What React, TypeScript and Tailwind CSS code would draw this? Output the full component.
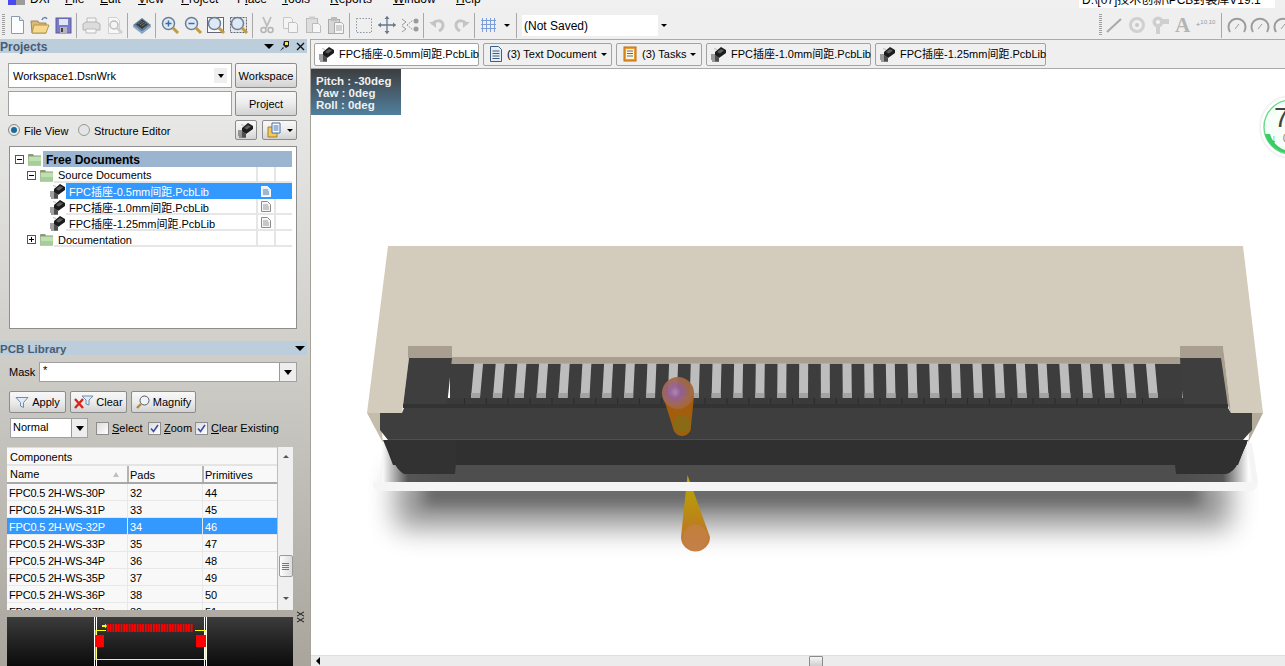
import React from "react";

const F = '"Liberation Sans","Noto Sans CJK SC",sans-serif';

function Chip({ className = "" }: { className?: string }) {
  return (
    <svg viewBox="0 0 16 16" className={`w-4 h-4 shrink-0 ${className}`}>
      <path d="M0 9h7M0 11h7M0 13h7M1 15h7" stroke="#444" strokeWidth="1" />
      <path d="M4 6l6-5 5 3v3l-7 5-4-3z" fill="#1c1c1c" />
      <path d="M6 6l4-3 3 1.500-4 3z" fill="#5e5e5e" />
      <path d="M4 9l4 3v3.500H4z" fill="#4e4e4e" />
      <path d="M3 2.500l3 1" stroke="#bbb" />
    </svg>
  );
}

function Folder() {
  return (
    <svg viewBox="0 0 15 13" className="w-[15px] h-[13px] shrink-0">
      <path d="M1 3V1.500L2 1h4l1 1.500h7v10H1z" fill="#8a9a78" />
      <rect x="1.500" y="3.500" width="12.500" height="9" fill="#bfe0b0" />
      <rect x="1.500" y="8" width="12.500" height="4.500" fill="#a4d098" />
    </svg>
  );
}

function Exp({ open }: { open: boolean }) {
  return (
    <span className="w-[9px] h-[9px] border border-[#555] bg-white relative shrink-0 block">
      <span className="absolute left-[1px] top-[3px] w-[5px] h-[1px] bg-black" />
      {!open && <span className="absolute left-[3px] top-[1px] w-[1px] h-[5px] bg-black" />}
    </span>
  );
}

function DocGlyph({ on }: { on?: boolean }) {
  const c = on ? "#ffffff" : "#8c8c8c";
  return (
    <svg viewBox="0 0 10 11" className="w-[10px] h-[11px]">
      <path d="M.5.500h6l3 3v7H.5z" fill={on ? "#e8f0ff" : "#f6f6f6"} stroke={c} />
      <path d="M2 4h5M2 6h6M2 8h6" stroke={on ? "#5a7a9a" : "#999"} />
    </svg>
  );
}

function TreeCols({ selected, doc }: { selected?: boolean; doc?: boolean }) {
  return (
    <>
      <span className="w-[18px] h-full border-l-2 border-[#e6e6e6] flex items-center justify-center shrink-0" style={selected ? { borderColor: "#3399ff" } : undefined}>
        {doc && <DocGlyph on={selected} />}
      </span>
      <span className="w-[18px] h-full border-l-2 border-[#e6e6e6] shrink-0" style={selected ? { borderColor: "#3399ff" } : undefined} />
    </>
  );
}

function TreeFile({ name, selected }: { name: string; selected?: boolean }) {
  return (
    <div className="flex h-[16px] items-center pl-[35px]">
      <Chip />
      <div className={`flex items-center h-full flex-1 ${selected ? "bg-[#3399ff] text-white" : "border-b-2 border-[#e6e6e6] text-black"}`}>
        <span className="flex-1 pl-[3px] whitespace-nowrap h-full leading-[18px]">{name}</span>
        <TreeCols selected={selected} doc />
      </div>
    </div>
  );
}

function Sep({ w = "w-[5px]" }: { w?: string }) {
  return (
    <span className={`${w} h-[25px] flex justify-center shrink-0`}>
      <span className="w-[1px] h-full bg-[#a8a8a8]" />
    </span>
  );
}

function Grip() {
  return <span className="w-[3px] h-[22px] border-y-0 shrink-0 bg-[repeating-linear-gradient(to_bottom,#a0a0a0_0,#a0a0a0_1px,#efefef_1px,#efefef_2px)]" />;
}

function TB({ children, w = "w-[23px]" }: { children: React.ReactNode; w?: string }) {
  return <span className={`${w} h-[25px] flex items-center justify-center shrink-0`}>{children}</span>;
}

const S = ({ children }: { children: React.ReactNode }) => (
  <svg viewBox="0 0 20 20" className="w-5 h-5">
    {children}
  </svg>
);

const Lens = ({ plus, minus, box, dash }: { plus?: boolean; minus?: boolean; box?: boolean; dash?: boolean }) => (
  <S>
    {(box || dash) && <rect x="1.500" y="2.500" width="16" height="15" fill={dash ? "#e8e8e8" : "#f8f8f8"} stroke="#667" strokeDasharray={dash ? "2 1" : undefined} />}
    <circle cx="8.500" cy="8.500" r="6" fill="#dfe9f5" stroke="#6a7f96" strokeWidth="1.500" />
    <path d="M13 13l5 5" stroke="#c49a3c" strokeWidth="3" />
    {(plus || minus) && <path d="M5.500 8.500h6" stroke="#3d6d9d" strokeWidth="1.500" />}
    {plus && <path d="M8.500 5.500v6" stroke="#3d6d9d" strokeWidth="1.500" />}
  </S>
);

function Toolbar() {
  return (
    <div className="h-[31px] bg-[#efefef] flex items-center pl-[2px] overflow-hidden shrink-0 pt-[3px] w-[1285px]">
      <Grip />
      <TB>
        <S>
          <path d="M4.500 1.500h8l4 4v13h-12z" fill="#fbfdff" stroke="#8a9ab0" />
          <path d="M12.500 1.500v4h4" fill="#dde6f2" stroke="#8a9ab0" />
        </S>
      </TB>
      <TB>
        <S>
          <path d="M1 6h7l1 2h7v10H2z" fill="#d9b878" stroke="#a08850" />
          <path d="M4 10h15l-3 8H2z" fill="#f8d98a" stroke="#b09858" />
          <path d="M12 5c1-3 4-3 5-1" fill="none" stroke="#5f86b8" strokeWidth="1.500" />
        </S>
      </TB>
      <TB>
        <S>
          <rect x="3" y="3" width="15" height="15" fill="#7b7bc8" stroke="#5a5aa0" />
          <rect x="6" y="4" width="9" height="6" fill="#dfe6f6" />
          <rect x="7" y="12" width="7" height="6" fill="#b4b4c4" />
          <rect x="8" y="13" width="2" height="4" fill="#444" />
        </S>
      </TB>
      <Sep />
      <TB>
        <S>
          <path d="M6 3h9v5H6z" fill="#f4f4f4" stroke="#bbb" />
          <path d="M2 9l3-2h11l3 2v6H2z" fill="#dcdcdc" stroke="#b4b4b4" />
          <path d="M5 14h10v4H5z" fill="#f8f8f8" stroke="#bbb" />
        </S>
      </TB>
      <TB>
        <S>
          <path d="M4.500 2.500h8l3 3v13h-11z" fill="#f7f7f7" stroke="#d0d0d0" />
          <circle cx="10" cy="10" r="4" fill="#f4f4f4" stroke="#bdbdbd" strokeWidth="1.500" />
          <path d="M13 13l5 5" stroke="#cfcfcf" strokeWidth="2.500" />
        </S>
      </TB>
      <Sep />
      <TB>
        <S>
          <path d="M1 10l9-7 9 7-9 7z" fill="#5d7f9f" />
          <path d="M4 9.500l6-5 6 5-6 4.500z" fill="#3a3a3a" />
          <path d="M1 10v2l9 7 9-7v-2l-9 7z" fill="#8aa6c0" />
          <path d="M6 9l4-3M8 10l4-3M10 11l4-3" stroke="#888" strokeWidth=".7" />
        </S>
      </TB>
      <Sep />
      <TB><Lens plus /></TB>
      <TB><Lens minus /></TB>
      <TB><Lens box /></TB>
      <TB><Lens dash /></TB>
      <Sep />
      <TB>
        <S>
          <path d="M6 2l4 9 4-9M14 2l-5 11" fill="none" stroke="#bdbdbd" strokeWidth="1.800" />
          <circle cx="6.500" cy="15" r="2.500" fill="none" stroke="#b4b4b4" strokeWidth="1.500" />
          <circle cx="13.500" cy="15" r="2.500" fill="none" stroke="#b4b4b4" strokeWidth="1.500" />
        </S>
      </TB>
      <TB>
        <S>
          <path d="M3.500 2.500h7l2 2v9h-9z" fill="#f4f4f4" stroke="#c6c6c6" />
          <path d="M8.500 7.500h7l2 2v8h-9z" fill="#f4f4f4" stroke="#c0c0c0" />
        </S>
      </TB>
      <TB>
        <S>
          <rect x="3.500" y="3.500" width="11" height="14" fill="#dedede" stroke="#bbb" />
          <rect x="6" y="1.500" width="6" height="3" fill="#ccc" />
          <path d="M9.500 8.500h6l2 2v7h-8z" fill="#f6f6f6" stroke="#bcbcbc" />
        </S>
      </TB>
      <TB>
        <S>
          <rect x="2.500" y="4.500" width="11" height="14" fill="#d6d6d6" stroke="#aaa" />
          <rect x="5" y="2" width="6" height="4" fill="#bbb" />
          <path d="M8.500 7.500h7l2 2v9h-9z" fill="#f6f6f6" stroke="#aaa" />
          <path d="M10 11h6M10 13h6M10 15h6" stroke="#aaa" />
        </S>
      </TB>
      <Sep />
      <TB>
        <S>
          <rect x="2.500" y="3.500" width="15" height="14" fill="none" stroke="#8a96a4" strokeDasharray="1.500 1.500" />
        </S>
      </TB>
      <TB>
        <S>
          <path d="M10 1.500v17M1.500 10h17" stroke="#64788e" strokeWidth="1.300" />
          <path d="M10 1l-2.500 3h5zM10 19l-2.500-3h5zM1 10l3-2.500v5zM19 10l-3-2.500v5z" fill="#64788e" />
        </S>
      </TB>
      <TB>
        <S>
          <path d="M2 4l4 3-4 3M2 11l4 3-4 3" fill="none" stroke="#9a9a9a" />
          <path d="M7 10l6-5M7 10l6 5" stroke="#999" strokeDasharray="1.500 1" />
          <circle cx="16" cy="6" r="2.500" fill="#9b9b9b" />
          <circle cx="16" cy="14" r="2.500" fill="#9b9b9b" />
        </S>
      </TB>
      <Sep />
      <TB>
        <S>
          <path d="M5 10c0-5 10-6 10 0 0 3-2 5-4 6" fill="none" stroke="#c4c4c4" strokeWidth="3" />
          <path d="M1 7h7v6z" fill="#c4c4c4" />
        </S>
      </TB>
      <TB>
        <S>
          <path d="M15 10c0-5-10-6-10 0 0 3 2 5 4 6" fill="none" stroke="#c4c4c4" strokeWidth="3" />
          <path d="M19 7h-7v6z" fill="#c4c4c4" />
        </S>
      </TB>
      <Sep />
      <TB>
        <S>
          <path d="M3.500 3v14M7.500 3v14M11.500 3v14M15.500 3v14M2 5.500h15M2 9.500h15M2 13.500h15" stroke="#7c9fdc" />
        </S>
      </TB>
      <span className="w-[14px] flex justify-center shrink-0">
        <span className="border-x-[3px] border-t-[3px] border-x-transparent border-t-black" />
      </span>
      <Sep />
      <div className="ml-[3px] w-[147px] h-[21px] bg-white flex items-center shrink-0 pl-[2px] text-[12px] mt-[1px]">
        <span className="flex-1">(Not Saved)</span>
        <span className="w-[11px] h-full bg-[#efefef] flex items-center justify-center">
          <span className="border-x-[3px] border-t-[3px] border-x-transparent border-t-black" />
        </span>
      </div>
      <span className="ml-[430px] shrink-0 flex items-center"><Grip /></span>
      <TB>
        <S><path d="M3 17L17 4" stroke="#a8a8a8" strokeWidth="2" /></S>
      </TB>
      <TB>
        <S>
          <circle cx="10" cy="10" r="6.500" fill="none" stroke="#d0d0d0" strokeWidth="3" />
          <circle cx="10" cy="10" r="2" fill="#c8c8c8" />
        </S>
      </TB>
      <TB>
        <S>
          <circle cx="8" cy="7" r="5.500" fill="#cfcfcf" />
          <circle cx="8" cy="7" r="2" fill="#f4f4f4" />
          <path d="M12 4h7v5h-6zM6 12h4v7H6z" fill="#cfcfcf" />
        </S>
      </TB>
      <TB>
        <span className="text-[#b4b4b4] font-bold text-[21px] leading-none" style={{ fontFamily: '"Liberation Serif",serif' }}>A</span>
      </TB>
      <TB>
        <span className="text-[#999] text-[8px] leading-none whitespace-nowrap">+<sup>10,10</sup></span>
      </TB>
      <Sep w="w-[8px]" />
      {[0, 1, 2].map((i) => (
        <TB key={i}>
          <S>
            <path d="M3 17a8.500 8.500 0 1 1 14 0" fill="none" stroke="#9c9c9c" strokeWidth="2" />
            <path d="M8 14l4-5" stroke="#9c9c9c" />
          </S>
        </TB>
      ))}
    </div>
  );
}

function PBtn({ children, className = "" }: { children: React.ReactNode; className?: string }) {
  return (
    <button className={`rounded-[2px] border border-[#8c8c8c] bg-gradient-to-b from-[#f8f8f8] via-[#ececec] to-[#d2d2d2] flex items-center justify-center shrink-0 ${className}`}>
      {children}
    </button>
  );
}

const Funnel = () => (
  <svg viewBox="0 0 14 13" className="w-[14px] h-[13px] shrink-0">
    <path d="M1 1.500h12L8.500 6.500v5l-3-1.500V6.500z" fill="#e0ecf8" stroke="#6f8eb0" />
  </svg>
);

function Check({ on }: { on?: boolean }) {
  return (
    <span className="w-[13px] h-[13px] border border-[#8d8d8d] bg-gradient-to-br from-[#dcdcdc] to-white flex items-center justify-center shrink-0">
      {on && (
        <svg viewBox="0 0 11 11" className="w-[11px] h-[11px]">
          <path d="M2 5.500l2.500 3L9 2" fill="none" stroke="#3a4fa0" strokeWidth="1.600" />
        </svg>
      )}
    </span>
  );
}

const Caret = () => <span className="border-x-[4px] border-t-[5px] border-x-transparent border-t-black" />;

function ProjectsPanel() {
  return (
    <div className="h-[302px] shrink-0 flex flex-col text-[11px]">
      <div className="h-[14px] bg-[#bccddc] mr-[3px] flex items-center shrink-0 relative">
        <span className="font-bold text-[#4a5c72] h-full leading-[16px] text-[12px]">Projects</span>
        <span className="ml-auto flex items-center gap-[6px] pr-[2px]">
          <span className="border-x-[5px] border-t-[5px] border-x-transparent border-t-black" />
          <svg viewBox="0 0 10 10" className="w-[10px] h-[10px]">
            <path d="M4 0h5v5L6 7 3 4zM3 6L0 10l4-3z" fill="#222" />
            <path d="M5 1h3v3H5z" fill="#ffe24a" />
          </svg>
          <svg viewBox="0 0 9 9" className="w-[9px] h-[9px]">
            <path d="M1 1l7 7M8 1L1 8" stroke="#111" strokeWidth="1.400" />
          </svg>
        </span>
      </div>
      <div className="pl-[8px] pr-[13px] pt-[10px] flex flex-col">
        <div className="flex gap-[3px] h-[25px]">
          <div className="w-[224px] bg-white border border-[#a0a0a0] flex items-center pl-[4px]">
            <span className="flex-1 pt-[1px]">Workspace1.DsnWrk</span>
            <span className="w-[13px] h-[15px] mr-[4px] bg-[#efefef] flex items-center justify-center">
              <span className="border-x-[3px] border-t-[4px] border-x-transparent border-t-black" />
            </span>
          </div>
          <PBtn className="w-[62px] pt-[1px]">Workspace</PBtn>
        </div>
        <div className="flex gap-[3px] h-[25px] mt-[3px]">
          <div className="w-[224px] bg-white border border-[#a0a0a0]" />
          <PBtn className="w-[62px] pt-[1px]">Project</PBtn>
        </div>
        <div className="flex items-center h-[20px] mt-[4px]">
          <span className="w-[12px] h-[12px] rounded-full border border-[#888] bg-[#e8e8e8] flex items-center justify-center ml-[0px]">
            <span className="w-[6px] h-[6px] rounded-full bg-[#1b6a9a]" />
          </span>
          <span className="ml-[4px] w-[54px] pt-[2px]">File View</span>
          <span className="w-[12px] h-[12px] rounded-full border border-[#999] bg-[#e4e4e4]" />
          <span className="ml-[4px] pt-[2px]">Structure Editor</span>
          <PBtn className="w-[22px] h-[20px] ml-auto mr-[5px]"><Chip /></PBtn>
          <PBtn className="w-[35px] h-[20px]">
            <svg viewBox="0 0 16 16" className="w-4 h-4">
              <path d="M1 5h9v10H1z" fill="#f4c95a" stroke="#a08030" />
              <path d="M5 1h8v10H5z" fill="#fff" stroke="#3d6da8" />
              <path d="M6.500 4h5M6.500 6h5M6.500 8h5" stroke="#3d6da8" />
            </svg>
            <span className="ml-[4px] border-x-[3px] border-t-[3px] border-x-transparent border-t-black" />
          </PBtn>
        </div>
        <div className="ml-[1px] mt-[6px] h-[183px] w-[288px] bg-white border border-[#8e8e8e] pt-[4px] pl-[5px] pr-[4px]">
          <div className="flex items-center h-[16px]">
            <Exp open />
            <span className="ml-[3px]"><Folder /></span>
            <span className="flex-1 h-full bg-[#9bb4d0] pl-[3px] font-bold leading-[18px] ml-[1px] text-[12px]">Free Documents</span>
          </div>
          <div className="flex items-center h-[16px] pl-[12px]">
            <Exp open />
            <span className="ml-[3px]"><Folder /></span>
            <div className="flex flex-1 h-full border-b-2 border-[#e6e6e6]">
              <span className="flex-1 pl-[4px] leading-[17px]">Source Documents</span>
              <TreeCols />
            </div>
          </div>
          <TreeFile name="FPC插座-0.5mm间距.PcbLib" selected />
          <TreeFile name="FPC插座-1.0mm间距.PcbLib" />
          <TreeFile name="FPC插座-1.25mm间距.PcbLib" />
          <div className="flex items-center h-[16px] pl-[12px]">
            <Exp open={false} />
            <span className="ml-[3px]"><Folder /></span>
            <div className="flex flex-1 h-full border-b-2 border-[#e6e6e6]">
              <span className="flex-1 pl-[4px] leading-[18px]">Documentation</span>
              <TreeCols />
            </div>
          </div>
        </div>
      </div>
    </div>
  );
}

const rows = [
  ["FPC0.5 2H-WS-30P", "32", "44"],
  ["FPC0.5 2H-WS-31P", "33", "45"],
  ["FPC0.5 2H-WS-32P", "34", "46"],
  ["FPC0.5 2H-WS-33P", "35", "47"],
  ["FPC0.5 2H-WS-34P", "36", "48"],
  ["FPC0.5 2H-WS-35P", "37", "49"],
  ["FPC0.5 2H-WS-36P", "38", "50"],
  ["FPC0.5 2H-WS-37P", "39", "51"],
];

function LibraryPanel() {
  return (
    <div className="flex-1 flex flex-col text-[11px] min-h-0">
      <div className="h-[14px] bg-[#bccddc] mr-[3px] flex items-center shrink-0">
        <span className="font-bold text-[#4a5c72] h-full leading-[16px] text-[11.5px]">PCB Library</span>
        <span className="ml-auto mr-[2px] border-x-[5px] border-t-[5px] border-x-transparent border-t-black" />
      </div>
      <div className="flex items-center mt-[7px] pl-[9px] h-[20px] shrink-0">
        <span className="w-[30px]">Mask</span>
        <div className="w-[258px] h-[20px] bg-white border border-[#a0a0a0] flex">
          <span className="flex-1 pl-[3px] leading-[14px]">*</span>
          <span className="w-[17px] bg-[#eeeeee] border-l border-[#999] flex items-center justify-center"><Caret /></span>
        </div>
      </div>
      <div className="flex pl-[9px] gap-[4px] mt-[9px] h-[22px] shrink-0">
        <PBtn className="w-[57px] gap-[3px]"><Funnel />Apply</PBtn>
        <PBtn className="w-[57px] gap-[2px]">
          <svg viewBox="0 0 20 14" className="w-[20px] h-[14px]">
            <path d="M1 4l8 9M9 4l-8 9" stroke="#d8261c" strokeWidth="2.400" />
            <path d="M8 1h11l-4 4v5l-3-1V5z" fill="#e0ecf8" stroke="#6f8eb0" />
          </svg>
          Clear
        </PBtn>
        <PBtn className="w-[65px] gap-[3px]">
          <svg viewBox="0 0 14 14" className="w-[14px] h-[14px]">
            <circle cx="8.500" cy="5.500" r="4.500" fill="#eef4fb" stroke="#5a5a5a" />
            <path d="M5 9l-4 4" stroke="#b88a2c" strokeWidth="2.400" />
          </svg>
          Magnify
        </PBtn>
      </div>
      <div className="flex items-center pl-[10px] mt-[5px] h-[20px] shrink-0">
        <div className="w-[78px] h-[20px] bg-white border border-[#a0a0a0] flex">
          <span className="flex-1 pl-[2px] leading-[16px]">Normal</span>
          <span className="w-[16px] bg-[#eeeeee] border-l border-[#999] flex items-center justify-center"><Caret /></span>
        </div>
        <span className="ml-[8px]"><Check /></span>
        <span className="ml-[3px] w-[36px] whitespace-nowrap pt-[1px]"><u>S</u>elect</span>
        <Check on />
        <span className="ml-[3px] w-[31px] whitespace-nowrap pt-[1px]"><u>Z</u>oom</span>
        <Check on />
        <span className="ml-[3px] whitespace-nowrap pt-[1px]"><u>C</u>lear Existing</span>
      </div>
      <div className="ml-[7px] mt-[9px] w-[286px] h-[163px] flex overflow-hidden shrink-0 bg-[#f8f8f8]">
        <div className="w-[270px] flex flex-col overflow-hidden">
          <div className="h-[19px] border-b-2 border-[#e4e4e4] border-t border-t-[#dcdcdc] pl-[3px] leading-[19px] shrink-0">Components</div>
          <div className="h-[18px] flex border-b-2 border-[#a8a8a8] leading-[19px] shrink-0">
            <span className="w-[120px] pl-[3px] flex justify-between pr-[8px] items-center">
              Name
              <span className="border-x-[3px] border-b-[5px] border-x-transparent border-b-[#c0c0c0]" />
            </span>
            <span className="w-[75px] pl-[1px] border-l-2 border-[#b4b4b4]">Pads</span>
            <span className="flex-1 pl-[1px] border-l-2 border-[#b4b4b4]">Primitives</span>
          </div>
          {rows.map((r, i) => (
            <div key={r[0]} className={`h-[17px] flex shrink-0 leading-[18px] border-b border-[#e8e8e8] ${i === 2 ? "bg-[#3399ff] text-white" : "text-black"}`}>
              <span className="w-[120px] pl-[2px] whitespace-nowrap tracking-[-0.2px]">{r[0]}</span>
              <span className="w-[75px] pl-[2px] border-l border-[#e8e8e8]">{r[1]}</span>
              <span className="flex-1 pl-[2px] border-l border-[#e8e8e8]">{r[2]}</span>
            </div>
          ))}
        </div>
        <div className="flex-1 bg-[#f0f0f0] flex flex-col items-center border-l border-[#bdbdbd]">
          <span className="mt-[8px] border-x-[3px] border-b-[3px] border-x-transparent border-b-[#555]" />
          <span className="mt-[97px] w-[14px] h-[22px] rounded-[2px] border border-[#9a9a9a] bg-gradient-to-r from-[#fdfdfd] to-[#dcdcdc] flex flex-col items-center justify-center gap-[1px]">
            <span className="w-[7px] h-[1px] bg-[#777]" />
            <span className="w-[7px] h-[1px] bg-[#777]" />
            <span className="w-[7px] h-[1px] bg-[#777]" />
            <span className="w-[7px] h-[1px] bg-[#777]" />
          </span>
          <span className="mt-[20px] border-x-[3px] border-t-[3px] border-x-transparent border-t-[#555]" />
        </div>
      </div>
      <div className="mt-[1px] h-[6px] shrink-0 relative">
        <svg viewBox="0 0 10 14" className="absolute right-[5px] top-0 w-[9px] h-[12px]">
          <path d="M1 1l8 5M9 1L1 6M1 13l8-5M9 13L1 8" stroke="#222" strokeWidth="1.300" />
        </svg>
      </div>
      <div className="ml-[7px] w-[286px] flex-1 bg-gradient-to-b from-[#3c3c3c] to-[#0c0c0c] overflow-hidden">
        <svg viewBox="7 617 286 49" className="w-full h-full block">
          <path d="M94.500 617v49M96.500 617v49M204.500 617v49M206.500 617v49" stroke="#fff" strokeWidth="1" />
          <path d="M106 630.500H96v29h109.500v-29H195" fill="none" stroke="#ffff00" strokeWidth="1.200" />
          <rect x="95" y="635" width="9" height="12" fill="#ff0000" />
          <rect x="196" y="635" width="10" height="12" fill="#ff0000" />
          {Array.from({ length: 32 }).map((_, i) => (
            <rect key={i} x={107 + i * 2.7} y={624} width={1.900} height={8} fill="#ff0000" />
          ))}
          <path d="M102 625h3v-1.500l2 2.500-2 2.500V627h-3z" fill="#ffff00" />
        </svg>
      </div>
    </div>
  );
}

function Tab({ w, active, icon, children }: { w: string; active?: boolean; icon: "chip" | "doc" | "task"; children: React.ReactNode }) {
  return (
    <div className={`${w} h-[23px] border border-[#a2a2a2] rounded-[2px] flex items-center pl-[4px] pr-[2px] gap-[4px] shrink-0 ${active ? "bg-white" : "bg-[#f0f0f0]"}`}>
      {icon === "chip" && <Chip />}
      {icon === "doc" && (
        <span className="ml-[1px] flex shrink-0">
          <svg viewBox="0 0 14 16" className="w-[14px] h-[16px] shrink-0">
            <path d="M1.500.500h8l3 3v12h-11z" fill="#e6eef6" stroke="#3d5f84" />
            <path d="M3.500 5h7M3.500 7.500h7M3.500 10h7M3.500 12.500h7" stroke="#3d5f84" />
          </svg>
        </span>
      )}
      {icon === "task" && (
        <span className="ml-[2px] mr-[1px] flex shrink-0">
          <svg viewBox="0 0 14 16" className="w-[14px] h-[16px] shrink-0">
            <rect x="1" y="1" width="12" height="14" fill="#f29a2a" stroke="#b86a10" />
            <rect x="3" y="3" width="8" height="10" fill="#fff6d8" />
            <path d="M4 5h6M4 7.500h6M4 10h6" stroke="#4a6fa0" />
          </svg>
        </span>
      )}
      <span className="flex-1 whitespace-nowrap">{children}</span>
      {icon !== "chip" && <span className="mr-[4px] border-x-[3px] border-t-[3px] border-x-transparent border-t-black" />}
    </div>
  );
}

function Scene() {
  const pins = Array.from({ length: 32 }, (_, i) => 475.5 + i * 21.87);
  return (
    <svg viewBox="311 69 974 586" className="w-full h-full block">
      <defs>
        <filter id="sh1" x="-10%" y="-100%" width="120%" height="300%">
          <feGaussianBlur stdDeviation="14" />
        </filter>
        <filter id="sh2" x="-10%" y="-100%" width="120%" height="300%">
          <feGaussianBlur stdDeviation="7" />
        </filter>
        <linearGradient id="cone2" x1="0" y1="0" x2="0" y2="1">
          <stop offset="0.100" stopColor="#b8a400" />
          <stop offset="0.700" stopColor="#bc7c20" />
          <stop offset="1" stopColor="#c4804a" />
        </linearGradient>
        <radialGradient id="ball" cx="0.420" cy="0.480" r="0.600">
          <stop offset="0" stopColor="#b084a8" />
          <stop offset="0.300" stopColor="#96609a" />
          <stop offset="0.700" stopColor="#a26a4c" />
          <stop offset="1" stopColor="#a8642c" />
        </radialGradient>
        <linearGradient id="sideL" x1="0" y1="0" x2="1" y2="0">
          <stop offset="0" stopColor="#ffffff" />
          <stop offset="0.350" stopColor="#555555" />
          <stop offset="1" stopColor="#4e4e4e" />
        </linearGradient>
        <linearGradient id="sideR" x1="1" y1="0" x2="0" y2="0">
          <stop offset="0" stopColor="#ffffff" />
          <stop offset="0.350" stopColor="#555555" />
          <stop offset="1" stopColor="#4e4e4e" />
        </linearGradient>
      </defs>

      {/* ground shadow */}
      <rect x="396" y="470" width="834" height="58" fill="#000" opacity="0.420" filter="url(#sh1)" />
      <rect x="424" y="470" width="776" height="36" fill="#444" opacity="0.550" filter="url(#sh2)" />

      {/* shaded floor seen behind the feet */}
      <rect x="382" y="443" width="74" height="39" fill="url(#sideL)" />
      <rect x="1175" y="443" width="74" height="39" fill="url(#sideR)" />
      <rect x="456" y="460" width="719" height="22" fill="#4e4e4e" />

      {/* lower cone */}
      <path d="M687.500 475L681 537a14.500 14.500 0 1 0 29 0z" fill="url(#cone2)" />
      <circle cx="695.500" cy="536.500" r="12" fill="#c4804a" opacity="0.700" />

      {/* plate */}
      <path d="M373 482h885l-1 5-4 4H378l-5-4z" fill="#f5f5f5" />
      <path d="M383 443l-3 39h2l2-39zM1247 443l5 39h6l-6-39z" fill="#f4f4f4" />

      {/* body */}
      <path d="M388 246H1243L1263 413H1231L1223 346H1180V358H452V346H410.500L402 413H367Z" fill="#d3ccbc" />
      <path d="M367 413h13l3 30z" fill="#c4bdac" />
      <path d="M1252 413h11l-15 30z" fill="#b3ac9b" />
      <rect x="408" y="346" width="44" height="12" fill="#a89f91" />
      <rect x="1180" y="346" width="43" height="12" fill="#a89f91" />
      <rect x="451" y="357" width="730" height="8" fill="#a89f91" />
      <path d="M1218 358L1223 346L1231 413L1228 406Z" fill="#a89f91" />

      {/* inner cavity */}
      <path d="M409 358H452L447 406H403Z" fill="#3e3e3e" />
      <path d="M1180 358H1221L1228 406H1183Z" fill="#3e3e3e" />
      <rect x="450" y="364" width="732" height="34" fill="#3d3d3d" />
      <rect x="447" y="398" width="737" height="6" fill="#3a3a3a" />
      <rect x="403" y="404" width="825" height="4" fill="#333" />
      {pins.map((x) => (
        <g key={x}>
          <path
            d={`M${(x + (815 - x) * 0.009 - 4.500).toFixed(1)} 363.500H${(x + (815 - x) * 0.009 + 4.500).toFixed(1)}L${(x + 4.500).toFixed(1)} 398H${(x - 4.500).toFixed(1)}Z`}
            fill="#bdbdbd"
          />
          <rect x={x - 4.500} y="393" width="9" height="5" fill="#a3a3a3" />
          <path d={`M${(x - 11).toFixed(1)} 398v6`} stroke="#2a2a2a" />
        </g>
      ))}

      {/* front face */}
      <path d="M380 413H402L404 408H1228L1231 413H1252V430L1243 440H388L380 430Z" fill="#3e3e3e" />
      <path d="M388 439.500H1243" stroke="#4e4e4e" strokeWidth="1" />
      <path d="M383 440H1248L1243 452L1238 465H393L388 452Z" fill="#303030" />
      <path d="M380 430L388 440L393 460Q397 470 404 474H455L456 462V440H388Z" fill="#323232" />
      <path d="M1175 440V465L1176 474H1226Q1234 472 1238 463L1247 443L1243 440Z" fill="#303030" />

      {/* upper cone and handle */}
      <path d="M663 396L673 428A9 9 0 0 0 691 426L694 396Z" fill="#a8600a" opacity="0.950" />
      <circle cx="682" cy="424" r="9" fill="#8a6a14" />
      <circle cx="678" cy="393" r="16" fill="url(#ball)" opacity="0.950" />
    </svg>
  );
}

export default function App() {
  return (
    <div className="w-[1285px] h-[666px] overflow-hidden flex flex-col bg-[#efefef] text-black text-[11px]" style={{ fontFamily: F }}>
      <div className="h-[8px] shrink-0 relative overflow-hidden bg-[#f0f0f0] flex">
        <span className="w-[8px] h-[5px] ml-[8px] bg-[#4a4af0]" />
        <span className="w-[9px] h-[5px] bg-[#9c9c9c]" />
        <div className="flex text-[12px] leading-none -mt-[7px] ml-[5px]">
          <span className="w-[35px]">DXP</span>
          <span className="w-[35px]"><u>F</u>ile</span>
          <span className="w-[38px]"><u>E</u>dit</span>
          <span className="w-[43px]"><u>V</u>iew</span>
          <span className="w-[56px]"><u>P</u>roject</span>
          <span className="w-[45px]">P<u>l</u>ace</span>
          <span className="w-[48px]"><u>T</u>ools</span>
          <span className="w-[63px]"><u>R</u>eports</span>
          <span className="w-[63px]"><u>W</u>indow</span>
          <span><u>H</u>elp</span>
        </div>
        <div className="ml-auto mr-[10px] w-[196px] h-[8px] bg-white overflow-hidden text-[12px] leading-none pl-[3px] whitespace-nowrap">
          <span className="block -mt-[6px]">D:\[07]技术创新\PCB封装库V19.1</span>
        </div>
      </div>
      <Toolbar />
      <div className="flex-1 flex min-h-0">
        <div className="w-[311px] shrink-0 flex flex-col bg-gradient-to-b from-[#f0f0f0] via-[#cfcec9] to-[#a9a59d] border-r border-[#a5a29a]">
          <ProjectsPanel />
          <LibraryPanel />
        </div>
        <div className="flex-1 flex flex-col min-w-0 bg-white">
          <div className="h-[30px] shrink-0 bg-[#efefef] border-y border-[#aaaaaa] flex items-center gap-[4px] pl-[3px]">
            <Tab w="w-[165px]" active icon="chip">FPC插座-0.5mm间距.PcbLib</Tab>
            <Tab w="w-[129px]" icon="doc">(3) Text Document</Tab>
            <Tab w="w-[86px]" icon="task">(3) Tasks</Tab>
            <Tab w="w-[165px]" icon="chip">FPC插座-1.0mm间距.PcbLib</Tab>
            <Tab w="w-[171px]" icon="chip">FPC插座-1.25mm间距.PcbLib</Tab>
          </div>
          <div className="flex-1 relative min-h-0 overflow-hidden">
            <Scene />
            <div className="absolute left-0 top-0 w-[90px] h-[46px] bg-gradient-to-b from-[#3c3e40] to-[#50809e] text-[#f0f0f0] font-bold text-[11.5px] leading-[12px] pl-[5px] pt-[6px]">
              <div>Pitch : -30deg</div>
              <div>Yaw : 0deg</div>
              <div>Roll : 0deg</div>
            </div>
            <div className="absolute left-[945px] top-[23px] w-[70px] h-[70px]">
              <svg viewBox="0 0 70 70" className="absolute inset-0 w-full h-full">
                <circle cx="35" cy="35" r="31" fill="#fff" stroke="#f3f3f3" strokeWidth="2" />
                <circle cx="35" cy="35" r="27" fill="#f6fff8" stroke="#62dc86" strokeWidth="1.400" />
                <path d="M9 42A27 27 0 0 0 61 42L56 42A22 24 0 0 1 14 42Z" fill="#3ccb66" />
              </svg>
              <span className="absolute left-[18px] top-[16px] text-[27px] leading-[20px] text-[#444]">7</span>
              <span className="absolute left-[15px] top-[41px] text-[11px] leading-none text-[#12b03c] font-bold">↓</span>
              <span className="absolute left-[27px] top-[42px] text-[10px] leading-none text-[#b06a20]">0</span>
            </div>
          </div>
          <div className="h-[11px] shrink-0 bg-[#ececec] border-t border-[#dedede] flex items-center relative">
            <span className="ml-[5px] border-y-[4px] border-r-[4px] border-y-transparent border-r-black" />
            <span className="ml-[489px] w-[14px] h-[11px] border border-[#8a8a8a] rounded-[1px] bg-gradient-to-b from-[#f6f6f6] to-[#cfcfcf]" />
          </div>
        </div>
      </div>
    </div>
  );
}
